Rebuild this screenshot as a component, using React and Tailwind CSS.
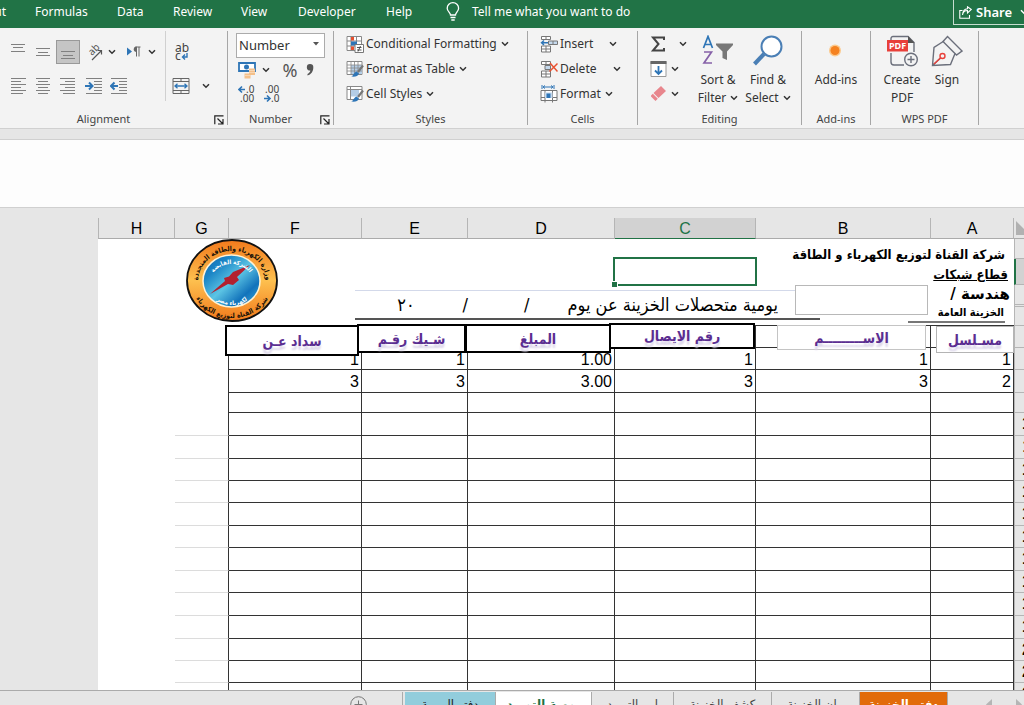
import clsx from 'clsx'

const MENU = [
  { name: 'Formulas', width: 'w-[82px]' },
  { name: 'Data', width: 'w-[56px]' },
  { name: 'Review', width: 'w-[68px]' },
  { name: 'View', width: 'w-[57px]' },
  { name: 'Developer', width: 'w-[88px]' },
  { name: 'Help', width: 'w-[60px]' },
]

// The sheet runs right to left, so column A is the last one here
const COLUMNS = [
  { name: 'H', width: 'w-[77px]' },
  { name: 'G', width: 'w-[54px]' },
  { name: 'F', width: 'w-[133px]' },
  { name: 'E', width: 'w-[106px]' },
  { name: 'D', width: 'w-[147px]' },
  { name: 'C', width: 'w-[141px]' },
  { name: 'B', width: 'w-[175px]' },
  { name: 'A', width: 'w-[83px]' },
]

const ROWS = [
  { n: 1, h: 'h-[20px]', blank: true },
  { n: 2, h: 'h-[26px]', blank: true, selected: true },
  { n: 3, h: 'h-[20px]', blank: true },
  { n: 4, h: 'h-[2px]', blank: true },
  { n: 5, h: 'h-[19px]', blank: true, last: true },
  { n: 6, h: 'h-[22px]' },
  { n: 7, h: 'h-[22px]', values: { F: '1', E: '1', D: '1.00', C: '1', B: '1', A: '1' } },
  { n: 8, h: 'h-[23px]', values: { F: '3', E: '3', D: '3.00', C: '3', B: '3', A: '2' } },
  { n: 9, h: 'h-[20px]' },
  { n: 10, h: 'h-[23px]' },
  { n: 11, h: 'h-[23px]' },
  { n: 12, h: 'h-[22px]' },
  { n: 13, h: 'h-[22px]' },
  { n: 14, h: 'h-[23px]' },
  { n: 15, h: 'h-[22px]' },
  { n: 16, h: 'h-[23px]' },
  { n: 17, h: 'h-[22px]' },
  { n: 18, h: 'h-[23px]' },
  { n: 19, h: 'h-[23px]' },
  { n: 20, h: 'h-[22px]' },
  { n: 21, h: 'h-[22px]' },
  { n: 22, h: 'h-[23px]' },
]

const TITLES = [
  { text: 'سداد عـن', box: 'left-[127px] top-[117px] w-[134px] h-[31px] border-2 border-black' },
  { text: 'شـيك رقـم', box: 'left-[259px] top-[116px] w-[109px] h-[29px] border-2 border-black' },
  { text: 'المبلغ', box: 'left-[367px] top-[116px] w-[146px] h-[29px] border-2 border-black' },
  { text: 'رقم الايصال', box: 'left-[511px] top-[115px] w-[146px] h-[26px] border-2 border-black' },
  { text: 'الاســـــــــم', box: 'left-[679px] top-[117px] w-[149px] h-[25px] border border-[#c4c4c4]' },
  { text: 'مسـلسل', box: 'left-[838px] top-[118px] w-[78px] h-[27px] border border-[#b4b4b4]' },
]

const SHEETS = [
  { name: 'دفتر اليومية', style: 'w-[91px] bg-[#92cddc] text-[#222]' },
  { name: 'يومية التوريد', style: 'w-[96px] bg-white text-[#1e7145] font-bold' },
  { name: 'امر التوريد', style: 'w-[82px] text-[#444]' },
  { name: 'كشف الخزينة', style: 'w-[98px] text-[#444]' },
  { name: 'بيان الخزينة', style: 'w-[88px] text-[#444]' },
  { name: 'دفتر الخزينة', style: 'w-[88px] bg-[#e26b0a] text-white font-bold' },
]

function Chevron({ className }) {
  return (
    <svg viewBox="0 0 8 6" className={clsx('w-2 h-1.5 shrink-0', className)} fill="none" stroke="currentColor" strokeWidth="1.5">
      <path d="M1 1.2 4 4.2 7 1.2" />
    </svg>
  )
}

function Lines({ rows, className }) {
  return (
    <svg viewBox="0 0 16 18" className={clsx('w-4 h-[18px]', className)} stroke="#808080" strokeWidth="1">
      {rows.map(([x1, x2, y]) => (
        <path key={y} d={`M${x1} ${y}H${x2}`} />
      ))}
    </svg>
  )
}

function IconButton({ label, className, children }) {
  return (
    <button aria-label={label} className={clsx('h-6 flex items-center justify-center shrink-0', className || 'w-6')}>
      {children}
    </button>
  )
}

function Group({ label, width, launcher, children }) {
  return (
    <section className={clsx('relative flex flex-col shrink-0 mt-[3px] h-[94px] border-r border-[#a6a6a6]', width)}>
      <div className="flex-1">{children}</div>
      <div className={clsx('text-center text-[11px] leading-3 text-[#444]', launcher && 'pr-5')}>{label}</div>
      {launcher && (
        <button aria-label={`${label} settings`} className="absolute right-[3px] bottom-0">
          <svg viewBox="0 0 10 10" className="w-2.5 h-2.5" fill="none" stroke="#222" strokeWidth="1.2">
            <path d="M9.5.8H.8V9.2M3.5 3.5 8.5 8.5M9 4V9H4" />
          </svg>
        </button>
      )}
    </section>
  )
}

function TopBar() {
  return (
    <header className="flex h-[28px] shrink-0 bg-[#217346] text-white text-[12px] leading-6">
      <nav className="flex">
        <a href="#layout" className="w-[35px] overflow-hidden flex">
          <span className="w-1.5 flex justify-end whitespace-nowrap">Page Layout</span>
        </a>
        {MENU.map((m) => (
          <a key={m.name} href={`#${m.name.toLowerCase()}`} className={m.width}>{m.name}</a>
        ))}
      </nav>
      <svg viewBox="0 0 14 20" className="w-3.5 h-5 mt-0.5" fill="none" stroke="white" strokeWidth="1.3">
        <path d="M4.5 13C4.5 10.5 1.2 9.500 1.200 6.200A5.600 5.400 0 0 1 12.600 6.200C12.600 9.500 9.500 10.500 9.500 13ZM4.500 15.500H9.500M5.300 18H8.700" />
      </svg>
      <button className="ml-3 self-start">Tell me what you want to do</button>
      <button className="ml-auto self-start flex items-center w-[71px] h-[25px] pl-[5px] border-l border-b border-[#c7ddd0] font-semibold text-[13px] overflow-hidden">
        <svg viewBox="0 0 13 13" className="w-[13px] h-[13px] shrink-0 mr-1" fill="none" stroke="white" strokeWidth="1.1">
          <path d="M3.500 4.500H.8V12.200H10.500V9M3.500 9C4 5.500 6 4.500 8.500 4.500V7L12.300 3.500 8.500.8V2.800C5.500 3 3.800 5 3.500 9Z" />
        </svg>
        Share
        <Chevron className="ml-2" />
      </button>
    </header>
  )
}

function AlignmentGroup() {
  return (
    <Group label="Alignment" width="w-[228px]" launcher>
      <div className="flex">
        <div className="pl-1.5 pt-[9px] h-[70px] w-[166px] border-r border-[#d0d0d0] space-y-2.5">
          <div className="flex gap-px">
            <IconButton label="Top align"><Lines rows={[[1, 15, 1.5], [3, 13, 4.5], [1, 15, 8.5]]} /></IconButton>
            <IconButton label="Middle align"><Lines rows={[[1, 15, 5.5], [3, 13, 9.5], [1, 15, 12.5]]} /></IconButton>
            <IconButton label="Bottom align" className="w-6 bg-[#c5c5c5] border border-[#999]">
              <Lines rows={[[1, 15, 8.5], [3, 13, 12.5], [1, 15, 15.500]]} />
            </IconButton>
            <IconButton label="Orientation" className="w-[39px] gap-1">
              <svg viewBox="0 0 18 18" className="w-[18px] h-[18px]" fill="none" stroke="#555" strokeWidth="1.200">
                <path d="M6 17 15 8M11.500 7.500H15.500V11.500" />
                <text x="0" y="0" transform="translate(6 13) rotate(-45)" fill="#555" stroke="none" fontSize="10">ab</text>
              </svg>
              <Chevron />
            </IconButton>
            <IconButton label="Text direction" className="w-[39px] gap-1.5">
              <svg viewBox="0 0 16 14" className="w-4 h-3.5">
                <path d="M1 2.500V10.500L6 6.500Z" fill="#2e75b6" />
                <path d="M10.500 2V11.500M13 2V11.500M14.500 2H9.500" stroke="#666" fill="none" />
                <path d="M10.500 1.500A2.700 2.700 0 0 0 10.500 7Z" fill="#666" />
              </svg>
              <Chevron />
            </IconButton>
          </div>
          <div className="flex gap-px">
            <IconButton label="Align left"><Lines rows={[[1, 16, 1.500], [1, 11, 4.500], [1, 16, 7.500], [1, 11, 10.500], [1, 16, 13.500], [1, 13, 16.500]]} /></IconButton>
            <IconButton label="Center"><Lines rows={[[1, 15, 1.500], [3, 13, 4.500], [1, 15, 7.500], [3, 13, 10.500], [1, 15, 13.500], [3, 13, 16.500]]} /></IconButton>
            <IconButton label="Align right"><Lines rows={[[0, 15, 1.500], [5, 15, 4.500], [0, 15, 7.500], [5, 15, 10.500], [0, 15, 13.500], [3, 15, 16.500]]} /></IconButton>
            <IconButton label="Increase indent">
              <svg viewBox="0 0 17 18" className="w-[17px] h-[18px]" fill="none">
                <path d="M1 1.500H17M9 4.500H17M9 7.500H17M9 10.500H17M9 13.500H17M1 16.500H17" stroke="#808080" />
                <path d="M0 9H7M4 5.500 7.500 9 4 12.500" stroke="#2e75b6" strokeWidth="2" />
              </svg>
            </IconButton>
            <IconButton label="Decrease indent">
              <svg viewBox="0 0 17 18" className="w-[17px] h-[18px]" fill="none">
                <path d="M1 1.500H17M9 4.500H17M9 7.500H17M9 10.500H17M9 13.500H17M1 16.500H17" stroke="#808080" />
                <path d="M8 9H1M4.500 5.500 1 9 4.500 12.500" stroke="#2e75b6" strokeWidth="2" />
              </svg>
            </IconButton>
          </div>
        </div>
        <div className="pl-1 pt-[9px] space-y-2.5">
          <IconButton label="Wrap text">
            <svg viewBox="0 0 14 18" className="w-3.5 h-[18px]" fill="#444">
              <text x="0" y="9" fontSize="12">ab</text>
              <text x="0" y="17" fontSize="12">c</text>
              <path d="M12 10V14H8M10 11.500 7.500 14 10 16.500" stroke="#2e75b6" strokeWidth="1.400" fill="none" />
            </svg>
          </IconButton>
          <IconButton label="Merge cells" className="w-[42px] gap-3">
            <svg viewBox="0 0 18 18" className="w-[18px] h-[18px]" fill="none" stroke="#666">
              <path d="M1 1.500H17V16.500H1ZM1 4.500H17M1 13.500H17M9 1.500V4.500M9 13.500V16.500" />
              <path d="M3 9H15M5.500 6.800 3 9 5.500 11.200M12.500 6.800 15 9 12.500 11.200" stroke="#2e75b6" strokeWidth="1.300" />
            </svg>
            <Chevron />
          </IconButton>
        </div>
      </div>
    </Group>
  )
}

function NumberGroup() {
  return (
    <Group label="Number" width="w-[106px]" launcher>
      <div className="relative ml-2 mt-px w-[89px]">
        <select aria-label="Number format" className="appearance-none w-full h-[25px] pl-0.5 text-[13px] bg-white border border-[#ababab] text-[#333]">
          <option>Number</option>
        </select>
        <svg viewBox="0 0 6 4" className="absolute right-1.5 top-2.5 w-1.5 h-1 pointer-events-none" fill="#555">
          <path d="M0 0H6L3 3.500Z" />
        </svg>
      </div>
      <div className="flex items-center h-6 pl-2.5 text-[#555]">
        <button aria-label="Accounting format" className="flex items-center gap-1.5 text-[#333]">
          <svg viewBox="0 0 18 17" className="w-[18px] h-[17px]">
            <path d="M1 1H17V9H1Z" fill="white" stroke="#2e75b6" strokeWidth="1.800" />
            <circle cx="8.500" cy="5" r="2.500" fill="#2e75b6" />
            <path d="M11 6.500H17V13H11ZM6.500 11.500H12.500V16.500H6.500Z" fill="#f4c08a" />
            <path d="M11 8.500H17M11 10.500H17M6.500 13.500H12.500" stroke="#f8e0c5" strokeWidth=".7" />
          </svg>
          <Chevron />
        </button>
        <button className="ml-2 w-6 text-[18px] leading-6">%</button>
        <button aria-label="Comma style" className="ml-1">
          <svg viewBox="0 0 8 12" className="w-2 h-3" fill="#555">
            <path d="M4 0A3.300 3.300 0 0 1 7.300 3.500C7.300 7.500 5 10.500 1.500 11.500V10C3.300 9 4.200 8 4.300 6.600A3.300 3.300 0 0 1 4 0Z" />
          </svg>
        </button>
      </div>
      <div className="flex gap-2 pl-2.5 mt-0.5">
        <button aria-label="Increase decimal">
          <svg viewBox="0 0 18 20" className="w-[18px] h-5" fill="#444">
            <path d="M7 5.500H1M4 2.500 1 5.500 4 8.500" stroke="#2e75b6" strokeWidth="1.600" fill="none" />
            <text x="8" y="9" fontSize="10">.0</text>
            <text x="2" y="18" fontSize="10">.00</text>
          </svg>
        </button>
        <button aria-label="Decrease decimal">
          <svg viewBox="0 0 18 20" className="w-[18px] h-5" fill="#444">
            <path d="M0 14.500H6M3 11.500 6 14.500 3 17.500" stroke="#2e75b6" strokeWidth="1.600" fill="none" />
            <text x="1" y="9" fontSize="10">.00</text>
            <text x="7" y="18" fontSize="10">.0</text>
          </svg>
        </button>
      </div>
    </Group>
  )
}

function RibbonRow({ icon, chevron = 'ml-1', children }) {
  return (
    <button className="flex items-center h-[25px] text-[12px] text-[#333] whitespace-nowrap">
      <svg viewBox="0 0 18 18" className="w-[18px] h-[18px] mr-0.5" fill="none">{icon}</svg>
      {children}
      <Chevron className={chevron} />
    </button>
  )
}

const brush = (
  <>
    <path d="M17 5.500 12 12" stroke="#777" strokeWidth="2.200" />
    <path d="M5 16.500C7.500 16 7.500 12.500 10.500 11.500L13 13.500C12 16.500 9 17 5 16.500Z" fill="#2e75b6" />
  </>
)

function StylesGroup() {
  return (
    <Group label="Styles" width="w-[194px]">
      <div className="pl-3">
        <RibbonRow
          icon={
            <>
              <path d="M1 1.500H15.500V15.500H1ZM1 6H15.500M1 11H15.500M5 1.500V15.500M10.500 1.500V15.500" stroke="#888" fill="white" />
              <path d="M5 2H8V5.500H5ZM5 11.500H8V15H5Z" fill="#e8502f" />
              <path d="M5 6.500H11V10.500H5Z" fill="#2e75b6" />
              <path d="M9 9.500H17.500V17.500H9Z" fill="white" stroke="#777" />
              <path d="M11 12.500H15.500M11 15H15.500M14.500 11 12 16.500" stroke="#444" strokeWidth=".9" />
            </>
          }
        >
          Conditional Formatting
        </RibbonRow>
        <RibbonRow
          icon={
            <>
              <path d="M1 1.500H16V14.500H1Z" fill="white" stroke="#888" />
              <path d="M5 5H16V14H5Z" fill="#b4cde6" />
              <path d="M1 5H16M1 8H16M1 11H16M5 1.500V14.500M8.500 1.500V14.500M12 1.500V14.500" stroke="#888" strokeWidth=".8" />
              {brush}
            </>
          }
        >
          Format as Table
        </RibbonRow>
        <RibbonRow
          icon={
            <>
              <path d="M1 1.500H16V14.500H1ZM1 4.500H16M4.500 1.500V14.500" fill="white" stroke="#888" />
              <path d="M5 5H13V11.500H5Z" fill="#b4cde6" />
              {brush}
            </>
          }
        >
          Cell Styles
        </RibbonRow>
      </div>
    </Group>
  )
}

function CellsGroup() {
  return (
    <Group label="Cells" width="w-[110px]">
      <div className="pl-3">
        <RibbonRow
          chevron="ml-4"
          icon={
            <>
              <path d="M1.500 1.500H10.500V4.500H1.500ZM6 1.500V4.500M1.500 11H10.500V17H1.500ZM6 11V17M1.500 14H10.500" stroke="#777" fill="white" />
              <path d="M8.500 6H17.500V9.500H8.500ZM13 6V9.500" fill="#c5d9ed" stroke="#777" />
              <path d="M8 7.800H1.500M4 5.500 1.500 7.800 4 10" stroke="#2e75b6" strokeWidth="1.400" />
            </>
          }
        >
          Insert
        </RibbonRow>
        <RibbonRow
          chevron="ml-4"
          icon={
            <>
              <path d="M1.500 1.500H10.500V4.500H1.500ZM6 1.500V4.500M1.500 11H10.500V17H1.500ZM6 11V17M1.500 14H10.500" stroke="#777" fill="white" />
              <path d="M5 5.500H10.500V9.500H5Z" fill="#c5d9ed" stroke="#777" />
              <path d="M10 3 17.500 11.500M17.500 3.500 9.500 11.500" stroke="#e8502f" strokeWidth="1.500" />
            </>
          }
        >
          Delete
        </RibbonRow>
        <RibbonRow
          chevron="ml-1"
          icon={
            <>
              <path d="M2 0V4M14 0V4M3 2H13M5 .5 3 2 5 3.500M11 .5 13 2 11 3.500" stroke="#2e75b6" />
              <path d="M1 5.500H17V15.500H1ZM5 5.500V17.500M12.500 5.500V17.500M1 12.500H17" stroke="#777" fill="white" />
              <path d="M5 7.500H12.500V13H5Z" fill="#c5d9ed" />
              <path d="M6.500 8.500H10.500V13H6.500Z" fill="#2e75b6" />
            </>
          }
        >
          Format
        </RibbonRow>
      </div>
    </Group>
  )
}

function BigButton({ icon, width, children }) {
  return (
    <button className={clsx('flex flex-col items-center text-[12px] leading-[18px] text-[#333] whitespace-nowrap', width)}>
      <svg viewBox="0 0 32 32" className="w-8 h-8 mt-1 mb-1" fill="none">{icon}</svg>
      {children}
    </button>
  )
}

function EditingGroup() {
  return (
    <Group label="Editing" width="w-[164px]">
      <div className="flex">
        <div className="pl-3 w-[55px]">
          <button aria-label="AutoSum" className="flex items-center h-[25px] gap-[13px]">
            <svg viewBox="0 0 16 16" className="w-4 h-4" fill="none" stroke="#444" strokeWidth="2">
              <path d="M14 4V1.500H3L8.500 8 3 14.500H14V12" />
            </svg>
            <Chevron />
          </button>
          <button aria-label="Fill" className="flex items-center h-[25px] gap-1">
            <svg viewBox="0 0 17 18" className="w-[17px] h-[18px]" fill="none">
              <path d="M1 1.500H16V16.500H1Z" fill="white" stroke="#999" />
              <path d="M.500 1H16.500V4H.500Z" fill="#666" />
              <path d="M8.500 6V14M5 10.500 8.500 14 12 10.500" stroke="#2e75b6" strokeWidth="1.800" />
            </svg>
            <Chevron />
          </button>
          <button aria-label="Clear" className="flex items-center h-[25px] gap-1">
            <svg viewBox="0 0 17 17" className="w-[17px] h-[17px]" fill="#e8868d">
              <path d="M11 1 16 6 8.500 13 3.500 8ZM2.800 8.700 7.800 13.700 5.500 16 1 11.500V10.500Z" />
            </svg>
            <Chevron />
          </button>
        </div>
        <BigButton
          width="w-[50px]"
          icon={
            <>
              <path d="M1.500 13 6 1.500 10.500 13M3 9.500H9" stroke="#2e75b6" strokeWidth="1.700" />
              <path d="M2 17H9.500L2 28H10" stroke="#8661a8" strokeWidth="1.700" />
              <path d="M14 8.500H31V10L25 16.500V25L20.500 23V16.500L14 10Z" fill="#777" />
            </>
          }
        >
          <span>Sort &amp;</span>
          <span className="flex items-center gap-1">Filter <Chevron /></span>
        </BigButton>
        <BigButton
          width="w-[50px]"
          icon={
            <>
              <path d="M12 19 2.500 29" stroke="#4a7fb5" strokeWidth="4" />
              <circle cx="19.500" cy="11.500" r="10" fill="white" stroke="#4a7fb5" strokeWidth="2" />
            </>
          }
        >
          <span>Find &amp;</span>
          <span className="flex items-center gap-1">Select <Chevron /></span>
        </BigButton>
      </div>
    </Group>
  )
}

function PdfGroups() {
  return (
    <>
      <Group label="Add-ins" width="w-[69px]">
        <BigButton
          width="w-full"
          icon={
            <>
              <circle cx="15" cy="15.500" r="6" fill="#fbc98c" />
              <circle cx="15" cy="15.500" r="4.500" fill="#f58220" />
            </>
          }
        >
          Add-ins
        </BigButton>
      </Group>
      <Group label="WPS PDF" width="w-[108px]">
        <div className="flex pl-1.5">
          <BigButton
            width="w-[50px]"
            icon={
              <>
                <path d="M5 6V3.500C5 2 6 1.500 7 1.500H22L28 7.500V17M5 18V27C5 29 6 30 8 30H18" stroke="#6b6f7b" strokeWidth="1.400" />
                <path d="M22 1V8H28.500Z" fill="#555" />
                <path d="M1 5H22V16.500H1Z" fill="#e8403a" />
                <text x="3" y="14" fontSize="9" fontWeight="700" fill="white">PDF</text>
                <circle cx="25" cy="24.500" r="6.300" stroke="#6b6f7b" strokeWidth="1.400" fill="#f3f3f3" />
                <path d="M21.500 24.500H28.500M25 21V28" stroke="#6b6f7b" strokeWidth="1.400" />
              </>
            }
          >
            <span>Create</span>
            <span>PDF</span>
          </BigButton>
          <BigButton
            width="w-[40px]"
            icon={
              <>
                <path d="M13 6 3 12.500 1.500 30.500 19.500 29.500 24 18.500M1.500 30.500 9.500 23" stroke="#6b6f7b" strokeWidth="1.400" />
                <path d="M16.500 1.500 31 16 25.500 20 12 6.500Z" stroke="#6b6f7b" strokeWidth="1.400" />
                <circle cx="11.500" cy="21" r="2.500" stroke="#e8403a" strokeWidth="1.400" />
                <path d="M9.500 23 3 29" stroke="#e8403a" strokeWidth="1.400" />
              </>
            }
          >
            Sign
          </BigButton>
        </div>
      </Group>
    </>
  )
}

function Emblem() {
  return (
    <svg viewBox="0 0 92 83" className="absolute left-[88px] top-[31px] w-[92px] h-[83px] font-['DejaVu_Sans_Condensed','DejaVu_Sans',sans-serif] font-bold">
      <defs>
        <linearGradient id="ring" x1="0" y1="0" x2="0" y2="1">
          <stop offset="0" stopColor="#f27a1c" />
          <stop offset=".5" stopColor="#fdc04f" />
          <stop offset="1" stopColor="#f27a1c" />
        </linearGradient>
        <linearGradient id="disc" x1="0" y1="0" x2="1" y2="1">
          <stop offset="0" stopColor="#0d62b0" />
          <stop offset=".25" stopColor="#1c86c6" />
          <stop offset=".5" stopColor="#5cc4e4" />
          <stop offset=".75" stopColor="#1273bb" />
          <stop offset="1" stopColor="#3bb0dc" />
        </linearGradient>
        <path id="ringTop" d="M12 42A34 30 0 0 1 80 42" />
        <path id="ringBottom" d="M5 42A41 37 0 0 0 87 42" />
        <path id="discTop" d="M24 44A21.500 19 0 0 1 67 44" />
        <path id="discBottom" d="M20 42A26 24 0 0 0 72 42" />
      </defs>
      <ellipse cx="46" cy="41.500" rx="45" ry="40.500" fill="url(#ring)" stroke="#111" strokeWidth="1.800" />
      <ellipse cx="45.500" cy="42" rx="28.500" ry="26" fill="url(#disc)" stroke="#fff3d6" strokeWidth="1.500" />
      <path d="M24 55 39 42 38 39 43 37.500 47 33 64 26 51 38 53 41 47 46 42 45Z" fill="#b3202f" />
      <g textAnchor="middle" direction="rtl">
        <text fontSize="7" fill="#1a1208"><textPath href="#ringTop" startOffset="50%">وزارة الكهرباء والطاقة المتجددة</textPath></text>
        <text fontSize="7" fill="#1a1208"><textPath href="#ringBottom" startOffset="50%">شركة القناة لتوزيع الكهرباء</textPath></text>
        <text fontSize="6" fill="white"><textPath href="#discTop" startOffset="50%">الشركة القابضة</textPath></text>
        <text fontSize="6" fill="white"><textPath href="#discBottom" startOffset="50%">لكهرباء مصر</textPath></text>
      </g>
    </svg>
  )
}

// Shapes and text boxes that float over the cells
function FloatingShapes() {
  return (
    <div dir="rtl" className="font-['DejaVu_Sans_Condensed','DejaVu_Sans',sans-serif] text-black whitespace-nowrap">
      <Emblem />

      <div className="absolute left-[515px] top-[49px] w-[144px] h-[29px] border-2 border-[#217346]">
        <span className="absolute -left-[3px] -bottom-[3px] w-1.5 h-1.5 bg-[#217346] border-t border-r border-white" />
      </div>

      <div className="absolute left-[257px] top-[82px] w-[465px] h-[30px] border-t border-t-[#d3d9ea] border-b-2 border-b-[#555] flex items-center pr-[42px] text-[18px]">
        <span>يومية متحصلات الخزينة عن يوم</span>
        <span className="mr-[38px]">/</span>
        <span className="mr-14">/</span>
        <span className="mr-12">٢٠</span>
      </div>

      <div className="absolute left-[697px] top-[77px] w-[133px] h-[30px] border border-[#b8b8b8] bg-white" />

      <div className="absolute right-[19px] top-[35px] text-[13px] leading-6 font-bold">شركة القناة لتوزيع الكهرباء و الطاقة</div>
      <div className="absolute right-[16px] top-[57px] text-[13px] leading-5 font-bold underline decoration-1">قطاع شبكات</div>
      <div className="absolute right-[14px] top-[76px] text-[15px] leading-5 font-bold font-['DejaVu_Sans',sans-serif]">هندسة /</div>
      <div className="absolute right-[20px] top-[95px] text-[11px] leading-5 font-bold">الخزينة العامة</div>
      <div className="absolute left-[810px] top-[113px] w-[97px] h-0.5 bg-[#777]" />

      {TITLES.map((t) => (
        <div
          key={t.text}
          className={clsx(
            'absolute bg-white flex items-center justify-center font-bold text-[14px] leading-5 text-[#5b2d91] [text-shadow:0_4px_2px_#dcd6ea]',
            t.box,
          )}
        >
          {t.text}
        </div>
      ))}
    </div>
  )
}

function Sheet() {
  return (
    <main className="flex flex-1 min-h-0 overflow-hidden bg-[#e6e6e6]">
      <div className="flex-1" />
      <div className="relative pt-2.5">
        <table className="w-[926px] table-fixed border-separate border-spacing-0 font-['Liberation_Sans',Arial,sans-serif] text-[16px] leading-none text-black">
          <thead>
            <tr className="h-[21px]">
              {COLUMNS.map((c) => (
                <th
                  key={c.name}
                  className={clsx(
                    'p-0 pt-0.5 font-normal border-r border-b border-r-[#b5b5b5]',
                    c.width,
                    c.name === 'C' ? 'bg-[#d2d2d2] text-[#217346] border-b-[#217346]' : 'border-b-[#ababab]',
                    c.name === 'H' && 'border-l border-l-[#b5b5b5]',
                  )}
                >
                  {c.name}
                </th>
              ))}
              <th aria-label="Select all" className="w-[10px] p-0 border-b border-[#ababab] overflow-hidden">
                <svg viewBox="0 0 8 14" className="ml-0.5 w-2 h-3.5" fill="#b1b1b1"><path d="M0 0 14 14H0Z" /></svg>
              </th>
            </tr>
          </thead>
          <tbody>
            {ROWS.map((r) => (
              <tr key={r.n} className={r.h}>
                {COLUMNS.map((c) => (
                  <td
                    key={c.name}
                    className={clsx(
                      'p-0 bg-white text-right',
                      r.values && 'pt-0.5',
                      c.name === 'G' && !r.blank && 'border-r border-r-[#333]',
                      c.name === 'G' && r.n > 9 && 'border-b border-b-[#dcdcdc]',
                      c.name < 'G' && (!r.blank || r.last) && 'border-b border-b-[#333]',
                      c.name < 'G' && !r.blank && 'border-r border-r-[#333] pr-0.5',
                    )}
                  >
                    {r.values?.[c.name]}
                  </td>
                ))}
                <th
                  scope="row"
                  className={clsx(
                    'p-0 overflow-hidden border-b border-[#b5b5b5]',
                    r.selected ? 'bg-[#d2d2d2] border-l-2 border-l-[#217346]' : 'border-l',
                  )}
                >
                  {!r.blank && <div className="w-[32px] text-center">{r.n}</div>}
                </th>
              </tr>
            ))}
          </tbody>
        </table>
        <FloatingShapes />
      </div>
    </main>
  )
}

function SheetTabs() {
  return (
    <footer className="flex justify-end h-[15px] shrink-0 overflow-hidden bg-[#e6e6e6] border-t border-[#ababab] pt-px">
      <button aria-label="New sheet" className="mt-1 mr-[35px] self-start">
        <svg viewBox="0 0 17 17" className="w-[17px] h-[17px]" fill="none" stroke="#777">
          <circle cx="8.500" cy="8.500" r="7.800" />
          <path d="M8.500 4.500V12.500M4.500 8.500H12.500" />
        </svg>
      </button>
      <nav className="flex shrink-0 border-l border-[#ababab] pl-0.5 text-[13px]">
        {SHEETS.map((s) => (
          <button key={s.name} dir="rtl" className={clsx("h-[26px] shrink-0 border-r border-[#ababab] whitespace-nowrap font-['DejaVu_Sans_Condensed','DejaVu_Sans',sans-serif]", s.style)}>
            {s.name}
          </button>
        ))}
      </nav>
      <svg viewBox="0 0 40 14" className="w-10 h-3.5 ml-9 shrink-0" fill="#b5b5b5">
        <path d="M8 7V18L2 12.500ZM32 7V18L38 12.500Z" />
      </svg>
    </footer>
  )
}

export default function App() {
  return (
    <div className="h-screen flex flex-col overflow-hidden bg-[#e6e6e6] font-['Noto_Sans','Open_Sans',sans-serif] text-[#333]">
      <TopBar />
      <div className="flex h-[101px] shrink-0 bg-[#f3f3f3] border-b border-[#d0d0d0]">
        <AlignmentGroup />
        <NumberGroup />
        <StylesGroup />
        <CellsGroup />
        <EditingGroup />
        <PdfGroups />
      </div>
      <div className="mt-2.5 h-[69px] shrink-0 bg-[#fdfdfd] border-y border-[#d0d0d0]" />
      <Sheet />
      <SheetTabs />
    </div>
  )
}
